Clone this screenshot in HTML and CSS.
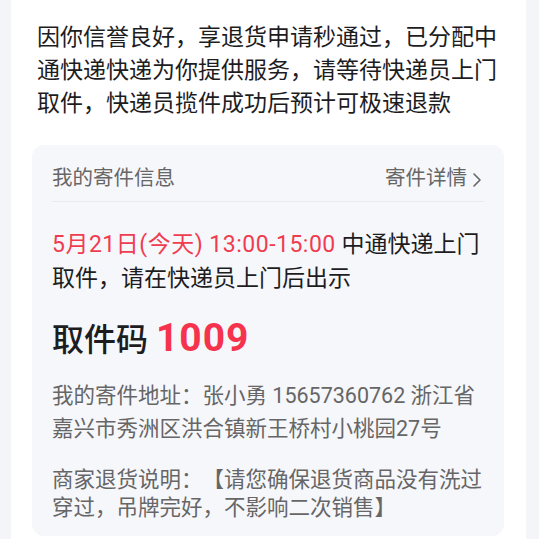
FILE: index.html
```html
<!DOCTYPE html>
<html lang="zh-CN">
  <head>
    <meta charset="UTF-8" />
    <meta name="viewport" content="width=device-width, initial-scale=1.0" />
    <title>退货寄件信息</title>
    <link rel="stylesheet" href="styles.css">
  </head>
  <body>
    <div class="panel">
      <p class="notice">
        因你信誉良好，享退货申请秒通过，已分配中通快递快递为你提供服务，请等待快递员上门取件，快递员揽件成功后预计可极速退款
      </p>

      <div class="card">
        <div class="card-header">
          <span class="card-title">我的寄件信息</span>
          <span class="card-link">
            寄件详情
            <svg class="chevron" width="10" height="16" viewBox="0 0 10 16">
              <path d="M2 2 L8 8 L2 14" fill="none" stroke="#666" stroke-width="1.6" stroke-linecap="round" stroke-linejoin="round" />
            </svg>
          </span>
        </div>

        <p class="pickup-time">
          <span class="red">5月21日(今天) 13:00-15:00</span> 中通快递上门取件，请在快递员上门后出示
        </p>

        <div class="pickup-code">
          取件码 <strong>1009</strong>
        </div>

        <p class="info address">我的寄件地址：张小勇 15657360762 浙江省嘉兴市秀洲区洪合镇新王桥村小桃园27号</p>
        <p class="info remark">商家退货说明：【请您确保退货商品没有洗过穿过，吊牌完好，不影响二次销售】</p>
      </div>
    </div>
  </body>
</html>
```

FILE: styles.css
```css
body {
  font-family: Roboto, "Noto Sans CJK SC", sans-serif;
  margin: 0;
  background-color: #f4f5f9;
  color: #1d1d1f;
  text-spacing-trim: space-all;
}

.panel {
  margin-left: 11px;
  width: 515px;
  min-height: 539px;
  box-sizing: border-box;
  background-color: #fff;
  padding: 21px 22px 0 21px;
}

.notice {
  margin: 0;
  padding: 0 5px;
  font-size: 23px;
  line-height: 33px;
}

.card {
  margin-top: 25px;
  background-color: #f6f7fb;
  border-radius: 12px;
  padding: 19px 20px 14px;
}

.card-header {
  display: flex;
  justify-content: space-between;
  align-items: center;
  font-size: 20.5px;
  line-height: 28px;
  color: #666;
  padding-bottom: 9px;
  border-bottom: 1px solid #e9eaef;
}

.card-link {
  display: flex;
  align-items: center;
  gap: 5px;
  margin-right: 2px;
}

.chevron {
  margin-top: 3px;
}

.pickup-time {
  margin: 26px 0 0;
  font-size: 23px;
  line-height: 34px;
}

.red {
  color: #f03c50;
  letter-spacing: 0.5px;
}

.pickup-code {
  margin-top: 20px;
  font-size: 32px;
  font-weight: 500;
  line-height: 44px;
}

.pickup-code strong {
  color: #f5334d;
  font-size: 39px;
  font-weight: 700;
  letter-spacing: 1px;
}

.info {
  margin: 0;
  font-size: 21.5px;
  color: #666;
}

.address {
  margin-top: 17px;
  line-height: 33px;
}

.remark {
  margin-top: 21px;
  line-height: 28px;
}
```
